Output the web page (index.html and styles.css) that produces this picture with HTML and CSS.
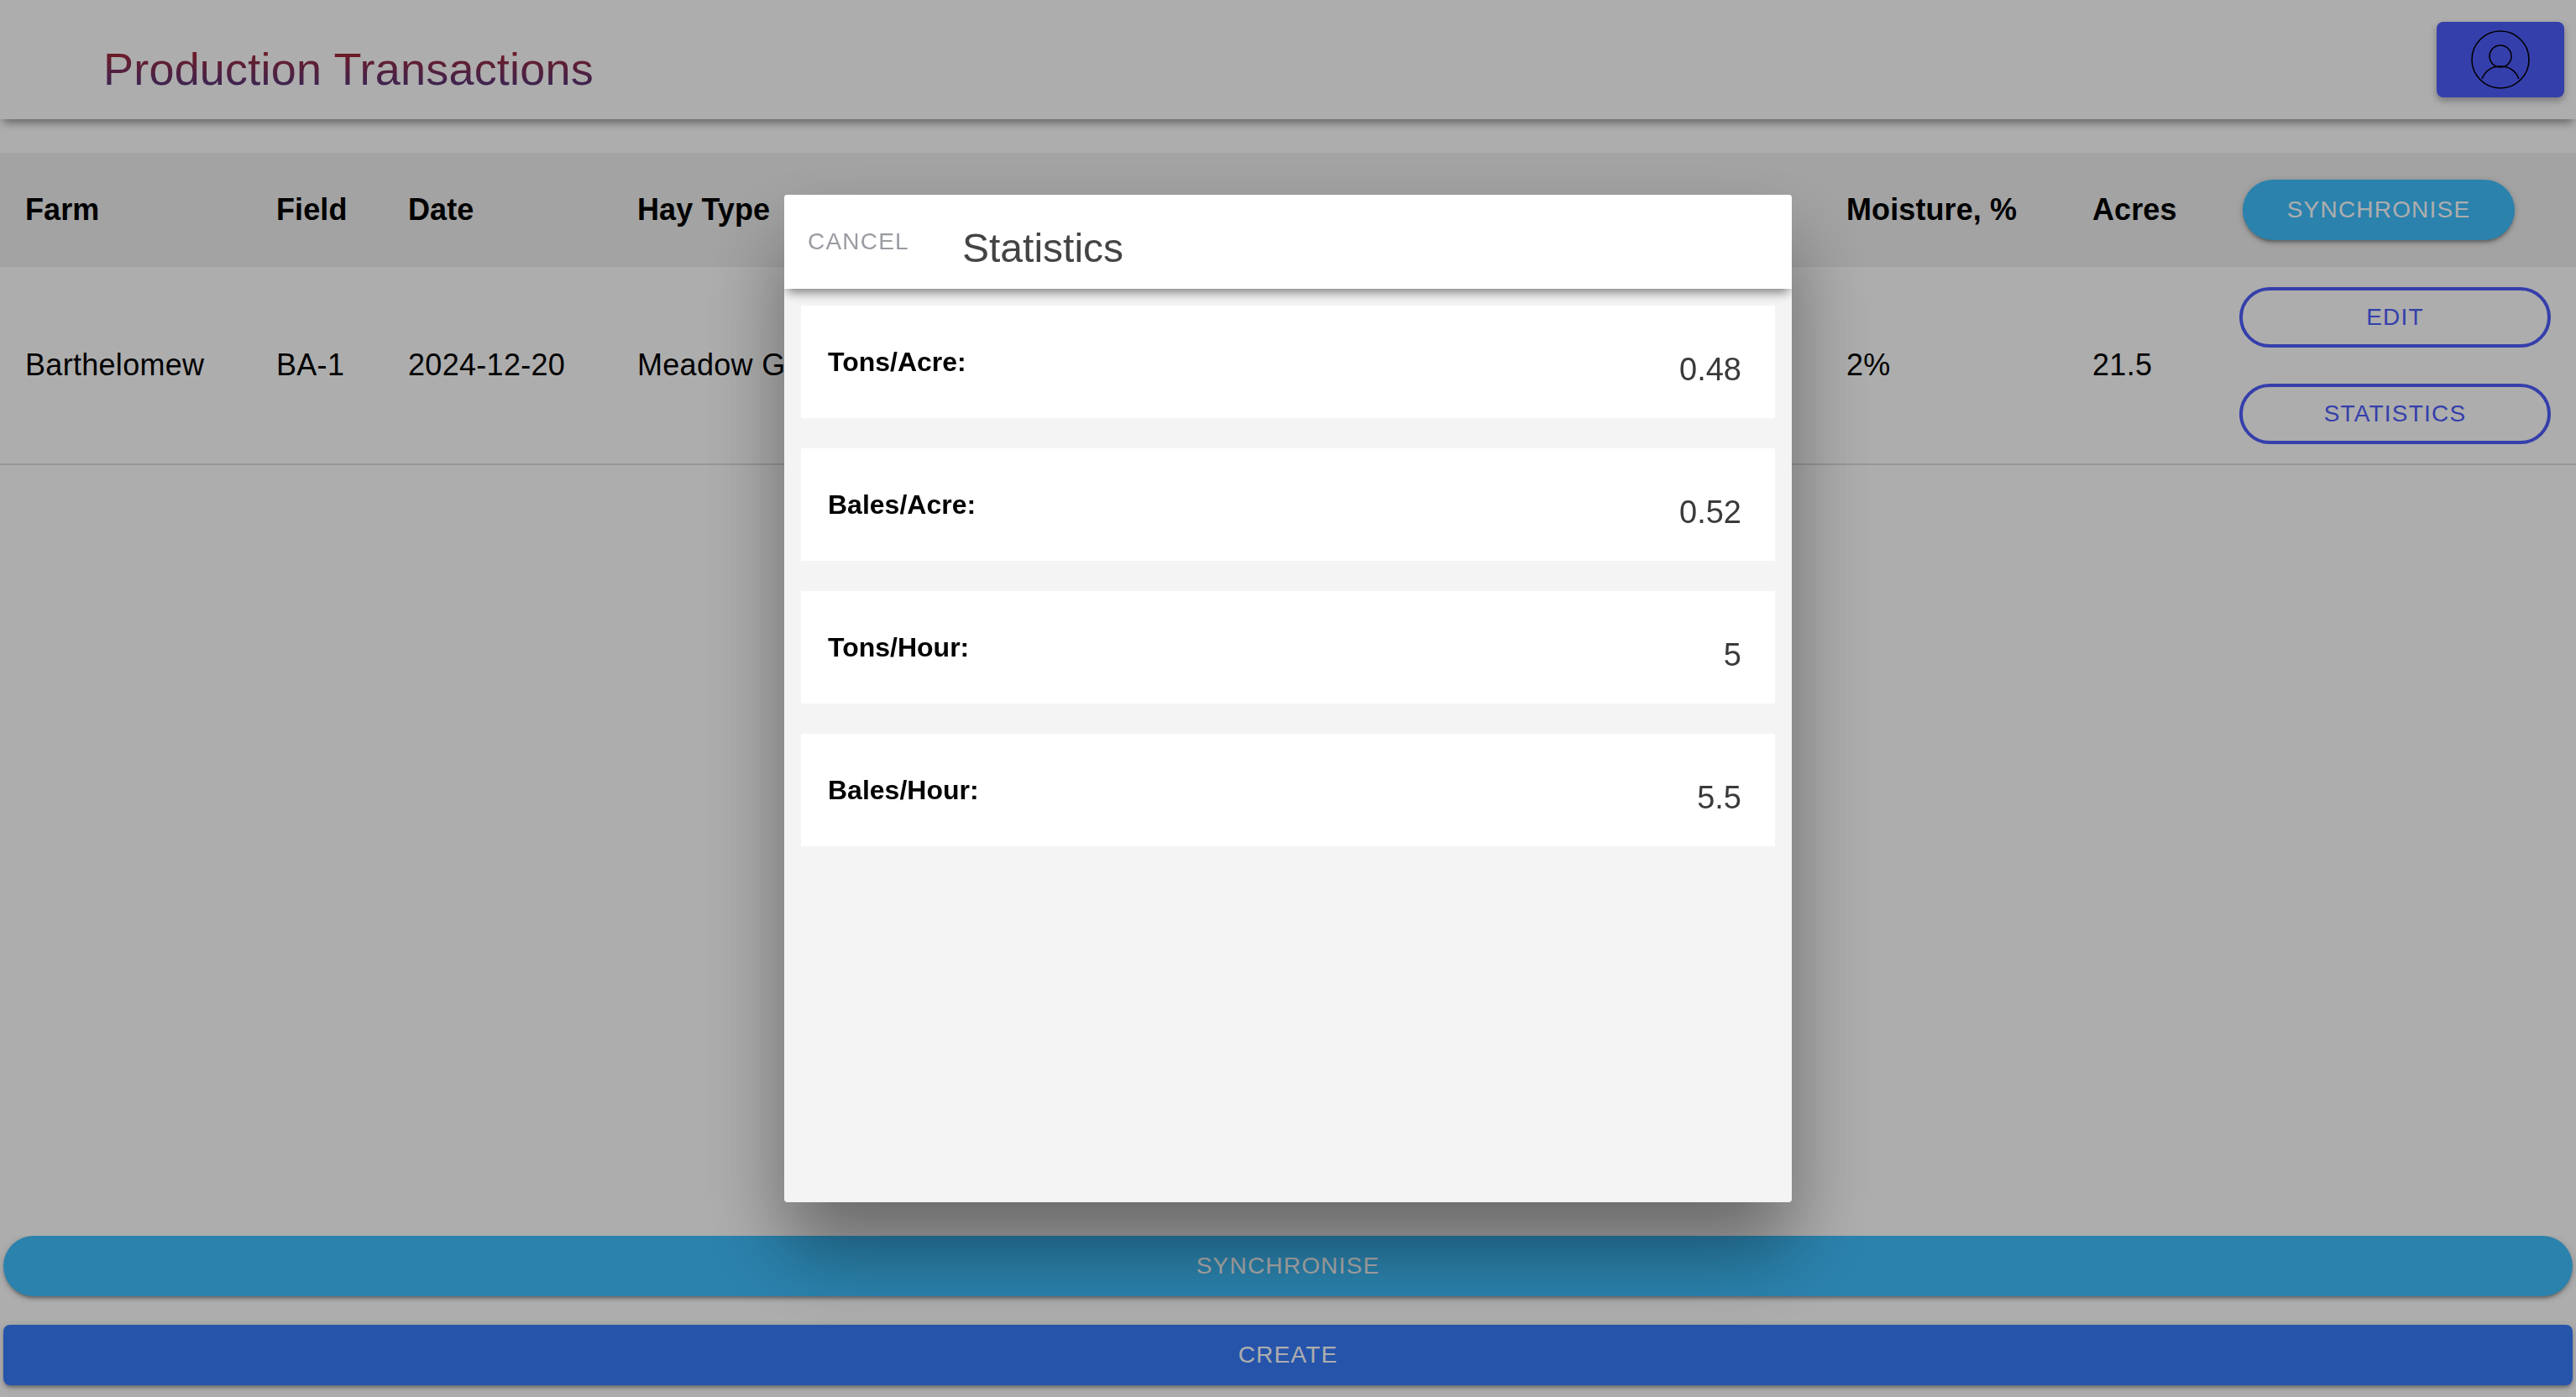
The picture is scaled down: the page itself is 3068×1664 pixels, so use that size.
FILE: index.html
```html
<!DOCTYPE html>
<html lang="en">
<head>
  <meta charset="UTF-8" />
  <title>Production Transactions</title>
  <link rel="stylesheet" href="styles.css">
</head>
<body>

  <div class="page">
    <header class="toolbar">
      <h1 class="page-title">Production Transactions</h1>
      <button class="avatar-btn" type="button" aria-label="Account">
        <svg class="avatar-icon" viewBox="0 0 80 80" fill="none" stroke="#000" stroke-width="1.6">
          <circle cx="40" cy="40" r="34"/>
          <circle cx="40" cy="36" r="13"/>
          <path d="M18 63C22 53 30 48 40 48C50 48 58 53 62 63"/>
        </svg>
      </button>
    </header>

    <main class="content">
      <div class="grid-row head-row">
        <div>Farm</div>
        <div>Field</div>
        <div>Date</div>
        <div class="hay-cell">Hay Type</div>
        <div>Moisture, %</div>
        <div>Acres</div>
        <div class="actions"><button class="btn btn-sync btn-pill" type="button">SYNCHRONISE</button></div>
      </div>
      <div class="grid-row body-row">
        <div>Barthelomew</div>
        <div>BA-1</div>
        <div>2024-12-20</div>
        <div class="hay-cell">Meadow G</div>
        <div>2%</div>
        <div>21.5</div>
        <div class="actions actions-stack">
          <button class="btn btn-outline" type="button">EDIT</button>
          <button class="btn btn-outline" type="button">STATISTICS</button>
        </div>
      </div>
    </main>

    <footer class="footer">
      <div class="footer-sync">
        <button class="btn btn-sync btn-wide btn-round" type="button">SYNCHRONISE</button>
      </div>
      <div class="footer-create">
        <button class="btn btn-create btn-wide" type="button">CREATE</button>
      </div>
    </footer>
  </div>

  <!-- statistics modal, sits over the dimmed page -->
  <div class="backdrop">
    <section class="modal">
      <div class="modal-head">
        <button class="cancel-btn" type="button">CANCEL</button>
        <h2 class="modal-title">Statistics</h2>
      </div>
      <div class="modal-body">
        <div class="stat-card"><strong>Tons/Acre:</strong><span class="stat-value">0.48</span></div>
        <div class="stat-card"><strong>Bales/Acre:</strong><span class="stat-value">0.52</span></div>
        <div class="stat-card"><strong>Tons/Hour:</strong><span class="stat-value">5</span></div>
        <div class="stat-card"><strong>Bales/Hour:</strong><span class="stat-value">5.5</span></div>
      </div>
    </section>
  </div>

</body>
</html>
```

FILE: styles.css
```css
* {
  box-sizing: border-box;
}

html, body {
  height: 100%;
}

body {
  margin: 0;
  overflow: hidden;
  background: #fff;
  color: #000;
  font-family: "Liberation Sans", Arial, sans-serif;
  font-size: 36px;
}

button {
  font-family: inherit;
  cursor: pointer;
}

.page {
  height: 100vh;
  display: flex;
  flex-direction: column;
}

/* toolbar */
.toolbar {
  height: 142px;
  flex: none;
  display: flex;
  align-items: center;
  justify-content: space-between;
  padding: 0 14px 0 123px;
  background: #fff;
  box-shadow: 0 8px 10px -4px rgba(0,0,0,0.42);
  position: relative;
}

.page-title {
  margin: 22px 0 0;
  font-size: 54px;
  font-weight: normal;
  letter-spacing: 0.2px;
  line-height: 1;
  background: linear-gradient(180deg, #a32a3a 15%, #5c3576 85%);
  -webkit-background-clip: text;
  background-clip: text;
  color: transparent;
}

.avatar-btn {
  width: 152px;
  height: 90px;
  padding: 0;
  border: 0;
  border-radius: 8px;
  background: #4f5efd;
  box-shadow: 0 4px 8px rgba(0,0,0,0.3);
  display: flex;
  align-items: center;
  justify-content: center;
}

.avatar-icon {
  width: 80px;
  height: 80px;
}

/* table */
.content {
  flex: 1;
  padding-top: 40px;
}

.grid-row {
  display: grid;
  grid-template-columns: 299px 157px 273px 1440px 293px 175px 1fr;
  align-items: center;
  padding-left: 30px;
}

.hay-cell {
  white-space: nowrap;
}

.head-row {
  height: 136px;
  background: #f0f0f0;
  font-weight: bold;
  letter-spacing: 0.1px;
}

.body-row {
  height: 236px;
  border-bottom: 2px solid #dedede;
  letter-spacing: 0.3px;
}

.actions {
  display: flex;
  padding-right: 30px;
}

.actions-stack {
  flex-direction: column;
  gap: 43px;
}

/* buttons */
.btn {
  height: 72px;
  padding: 0;
  border: 0;
  color: #fff;
  font-size: 28px;
  letter-spacing: 1.2px;
}

.btn-sync {
  background: #3fc0ff;
  box-shadow: 0 4px 4px -2px rgba(0,0,0,0.35), 0 2px 8px rgba(0,0,0,0.2);
}

.btn-pill {
  width: 324px;
  margin-left: 4px;
  border-radius: 36px;
}

.btn-outline {
  width: 100%;
  background: transparent;
  border: 4px solid #4f5efd;
  border-radius: 36px;
  color: #4f5efd;
}

.btn-wide {
  display: block;
  width: 100%;
}

.btn-round {
  border-radius: 36px;
}

.btn-create {
  background: #387dfc;
  border-radius: 8px;
  box-shadow: 0 4px 4px -2px rgba(0,0,0,0.35), 0 2px 8px rgba(0,0,0,0.2);
}

/* footer */
.footer {
  flex: none;
  padding-bottom: 14px;
}

.footer-sync {
  overflow: hidden;
  padding: 0 4px 8px;
}

.footer-create {
  padding: 26px 4px 0;
}

/* modal */
.backdrop {
  position: fixed;
  inset: 0;
  display: flex;
  align-items: center;
  justify-content: center;
  background: rgba(0,0,0,0.32);
}

.modal {
  width: 1200px;
  height: 1200px;
  border-radius: 4px;
  overflow: hidden;
  background: #f4f4f4;
  box-shadow: 0 56px 96px rgba(0,0,0,0.4);
  display: flex;
  flex-direction: column;
}

.modal-head {
  height: 112px;
  flex: none;
  display: flex;
  align-items: center;
  background: #fff;
  box-shadow: 0 8px 12px -4px rgba(0,0,0,0.5);
  position: relative;
}

.cancel-btn {
  width: 212px;
  padding: 0 0 0 28px;
  border: 0;
  background: none;
  color: #9a9ca3;
  font-size: 28px;
  letter-spacing: 1.2px;
  text-align: left;
}

.modal-title {
  margin: 14px 0 0;
  color: #444;
  font-size: 48px;
  font-weight: normal;
}

.modal-body {
  padding: 20px;
  display: flex;
  flex-direction: column;
  gap: 36px;
}

.stat-card {
  height: 134px;
  padding: 0 40px 0 32px;
  background: #fff;
  display: flex;
  align-items: center;
  justify-content: space-between;
  font-size: 32px;
}

.stat-value {
  padding-top: 18px;
  color: #3a3a3a;
  font-size: 38px;
}
```
